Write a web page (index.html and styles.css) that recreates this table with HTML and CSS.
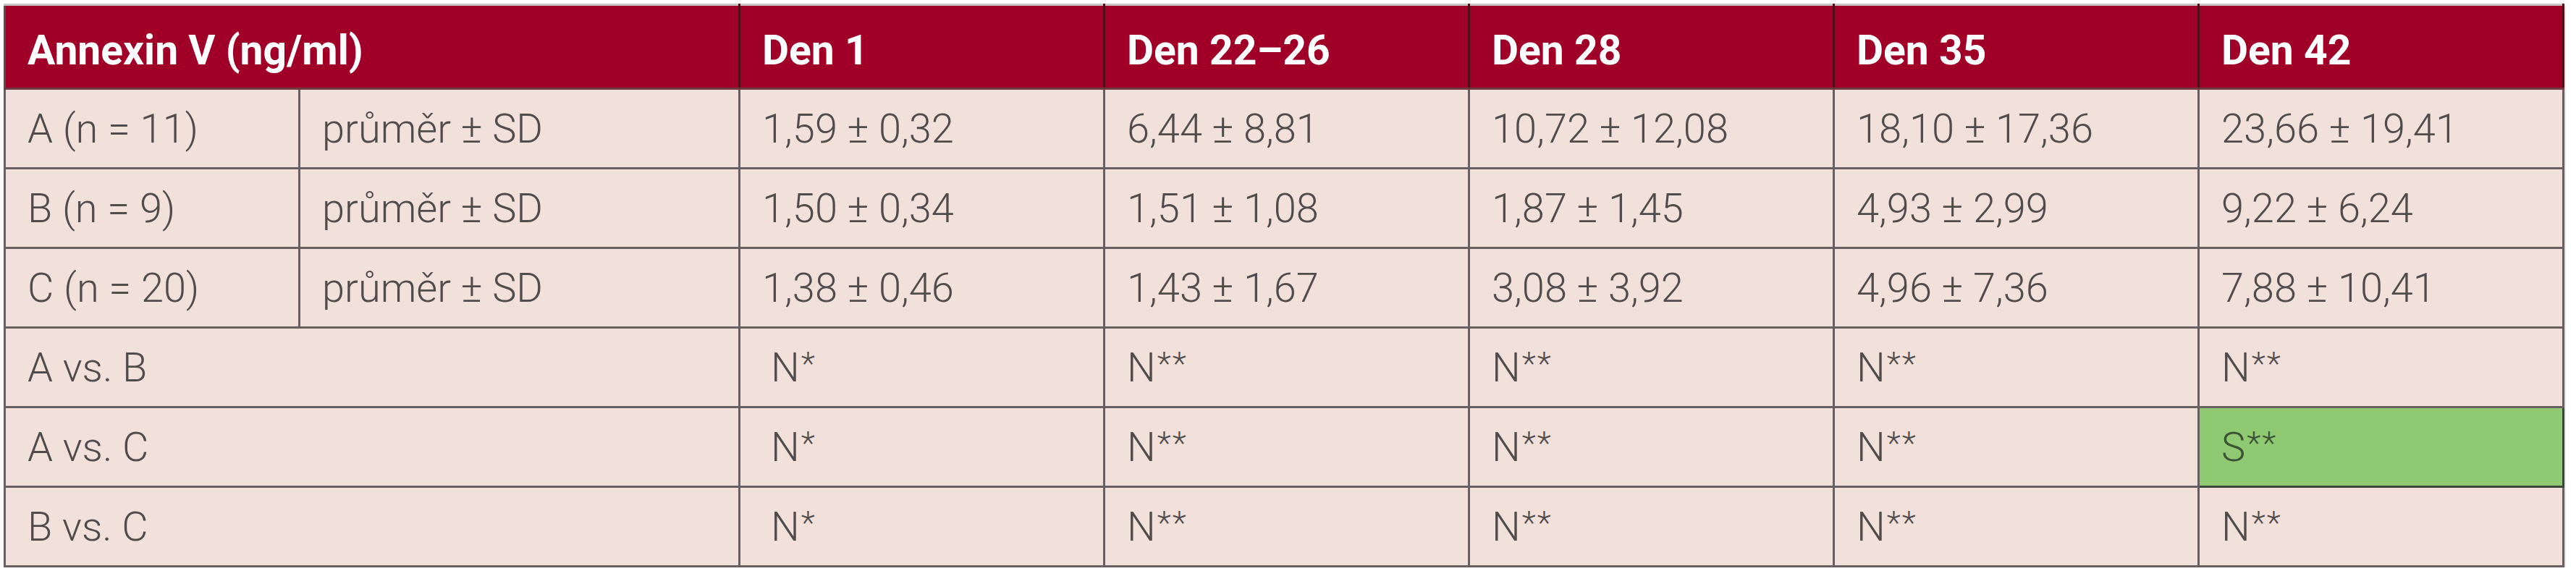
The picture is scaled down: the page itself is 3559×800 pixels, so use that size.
FILE: index.html
```html
<!DOCTYPE html>
<html lang="cs">
<head>
<meta charset="utf-8">
<title>Annexin V</title>
<link rel="stylesheet" href="styles.css">
</head>
<body>
<table class="annex">
  <colgroup>
    <col class="c-group">
    <col class="c-stat">
    <col class="c-day">
    <col class="c-day">
    <col class="c-day">
    <col class="c-day">
    <col class="c-day">
  </colgroup>
  <thead>
    <tr>
      <th colspan="2" class="first">Annexin V (ng/ml)</th>
      <th>Den 1</th>
      <th>Den 22–26</th>
      <th>Den 28</th>
      <th>Den 35</th>
      <th>Den 42</th>
    </tr>
  </thead>
  <tbody>
    <tr>
      <td>A (n = 11)</td>
      <td>průměr ± SD</td>
      <td>1,59 ± 0,32</td>
      <td>6,44 ± 8,81</td>
      <td>10,72 ± 12,08</td>
      <td>18,10 ± 17,36</td>
      <td>23,66 ± 19,41</td>
    </tr>
    <tr>
      <td>B (n = 9)</td>
      <td>průměr ± SD</td>
      <td>1,50 ± 0,34</td>
      <td>1,51 ± 1,08</td>
      <td>1,87 ± 1,45</td>
      <td>4,93 ± 2,99</td>
      <td>9,22 ± 6,24</td>
    </tr>
    <tr>
      <td>C (n = 20)</td>
      <td>průměr ± SD</td>
      <td>1,38 ± 0,46</td>
      <td>1,43 ± 1,67</td>
      <td>3,08 ± 3,92</td>
      <td>4,96 ± 7,36</td>
      <td>7,88 ± 10,41</td>
    </tr>
    <tr>
      <td colspan="2">A vs. B</td>
      <td class="ind">N<span class="ast">*</span></td>
      <td>N<span class="ast">**</span></td>
      <td>N<span class="ast">**</span></td>
      <td>N<span class="ast">**</span></td>
      <td>N<span class="ast">**</span></td>
    </tr>
    <tr>
      <td colspan="2">A vs. C</td>
      <td class="ind">N<span class="ast">*</span></td>
      <td>N<span class="ast">**</span></td>
      <td>N<span class="ast">**</span></td>
      <td>N<span class="ast">**</span></td>
      <td class="sig">S<span class="ast">**</span></td>
    </tr>
    <tr>
      <td colspan="2">B vs. C</td>
      <td class="ind">N<span class="ast">*</span></td>
      <td>N<span class="ast">**</span></td>
      <td>N<span class="ast">**</span></td>
      <td>N<span class="ast">**</span></td>
      <td>N<span class="ast">**</span></td>
    </tr>
  </tbody>
</table>
</body>
</html>
```
FILE: styles.css
```css
html, body {
  margin: 0;
  background: #ffffff;
}

body {
  padding: 5px 0 0 5px;
}

.annex {
  border-collapse: collapse;
  table-layout: fixed;
  width: 3537px;
  font-family: Roboto, "Liberation Sans", sans-serif;
  box-shadow: 1px 3px 2px rgba(0, 0, 0, 0.22);
}

.c-group { width: 407px; }
.c-stat { width: 608px; }
.c-day { width: 504px; }

.annex th {
  background: #a00028;
  color: #ffffff;
  font-weight: 700;
  font-size: 57px;
  text-align: left;
  height: 116px;
  padding: 10px 0 0 30px;
  border-top: 3px solid #c9c4c4;
  border-bottom: 3px solid #6f3940;
  border-left: 3px solid #4f1019;
  border-right: 3px solid #4f1019;
  box-sizing: border-box;
  vertical-align: middle;
}

.annex th.first {
  border-left-color: #5d4a4d;
}

.annex td {
  background: #f2e1db;
  color: #504c4c;
  font-weight: 300;
  font-size: 56px;
  text-align: left;
  height: 110px;
  padding: 0 0 0 30px;
  border: 3px solid #686060;
  box-sizing: border-box;
  vertical-align: middle;
  white-space: nowrap;
}

.annex td.ind {
  padding-left: 42px;
}

.annex .ast {
  font-size: 0.8em;
  letter-spacing: 2px;
  margin-left: 2px;
  vertical-align: 0.18em;
}

.annex td.sig {
  background: #8fca72;
  color: #3c5236;
  border: 3px solid #3b4638;
}
```
